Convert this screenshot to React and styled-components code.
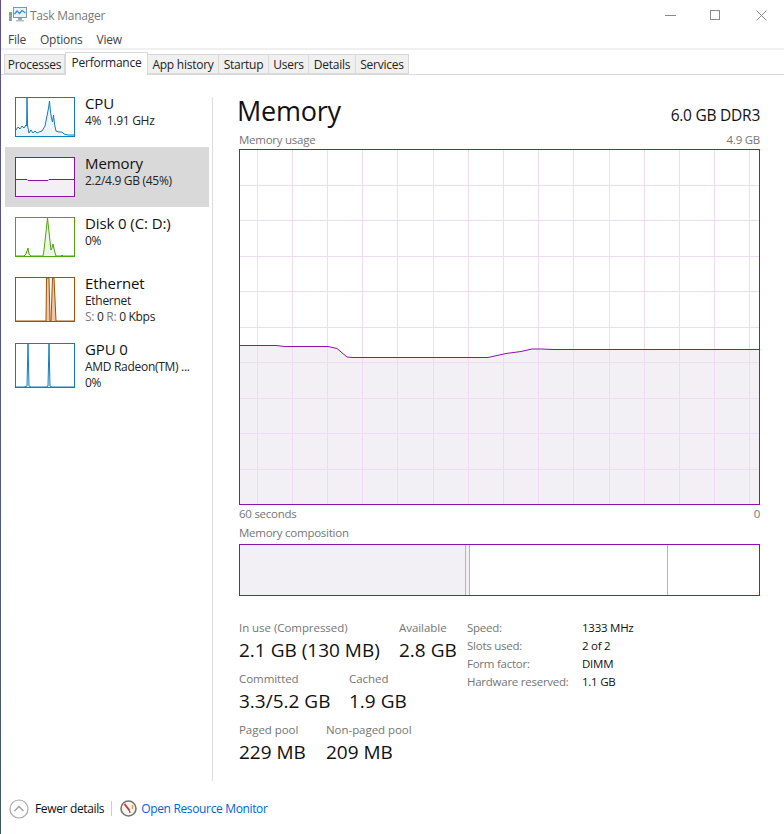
import React from 'react';
import styled, { createGlobalStyle } from 'styled-components';

const PURPLE = '#8b12ae';
const GRID = '#eedcf4';
const FILL = '#f2f0f4';

const GlobalStyle = createGlobalStyle`
  html, body {
    margin: 0;
    padding: 0;
    background: #fff;
  }
  body {
    font-family: 'Open Sans', 'Noto Sans', sans-serif;
    font-size: 12px;
    color: #111;
  }
`;

const tabs = [
  { label: 'Processes', width: 61 },
  { label: 'Performance', width: 83, active: true },
  { label: 'App history', width: 71 },
  { label: 'Startup', width: 50 },
  { label: 'Users', width: 40 },
  { label: 'Details', width: 47 },
  { label: 'Services', width: 53 },
];

const devices = [
  {
    name: 'CPU',
    lines: ['4%  1.91 GHz'],
    color: '#117dbb',
    tint: '#eef5fa',
    points: '0,32 2,29 4,31 6,28 8,30 10,27 10.6,28 11,0 11.6,28 13,35 15,32 17,35 19,33 21,35 23,34 26,33 29,28 31,18 32.5,10 33.5,3 34.5,14 35.5,20 36.5,24 37.5,17 38.5,26 40,33 43,34 46,34 48,36 52,37 58,37',
  },
  {
    name: 'Memory',
    lines: ['2.2/4.9 GB (45%)'],
    color: PURPLE,
    tint: FILL,
    points: '0,21.5 11,21.5 12,22.5 32,22.5 33,21.5 58,21.5',
    selected: true,
  },
  {
    name: 'Disk 0 (C: D:)',
    lines: ['0%'],
    color: '#4da60c',
    tint: '#edf6e6',
    points: '0,38 8,38 10,36 12,30 13,36 15,38 27,38 28,32 30,14 31.5,0 33,14 35,32 36,30 37,26 38.5,33 40,38 45,38 46,37 47,38 58,38',
  },
  {
    name: 'Ethernet',
    lines: ['Ethernet', 'throughput'],
    color: '#a74f01',
    tint: '#eec7a6',
    points: '0,43 30,43 30.5,0 33,0 34,43 35,43 36.5,0 38,0 40,43 58,43',
    tall: true,
  },
  {
    name: 'GPU 0',
    lines: ['AMD Radeon(TM) ...', '0%'],
    color: '#117dbb',
    tint: '#e6f1f8',
    points: '0,43 8,43 11,42 12,0 13,42 15,43 30,43 32,42 33,0 34,42 36,43 58,43',
    tall: true,
  },
];

const gridX = Array.from({ length: 15 }, (_, i) => Math.floor(17 + i * 35.2) + 0.5);
const gridY = Array.from({ length: 9 }, (_, i) => Math.floor(35 + i * 35.5) + 0.5);
const usage = '0,195.5 36,195.5 45,196.5 88,196.5 97,198.5 107,207 113,207.5 248,207.5 266,203.5 281,201.5 292,199 302,199 312,199.5 519,199.5';

const stats = [
  [
    { label: 'In use (Compressed)', value: '2.1 GB (130 MB)', width: 160 },
    { label: 'Available', value: '2.8 GB', width: 68 },
  ],
  [
    { label: 'Committed', value: '3.3/5.2 GB', width: 110 },
    { label: 'Cached', value: '1.9 GB', width: 68 },
  ],
  [
    { label: 'Paged pool', value: '229 MB', width: 87 },
    { label: 'Non-paged pool', value: '209 MB', width: 100 },
  ],
];

const specs = [
  ['Speed:', '1333 MHz'],
  ['Slots used:', '2 of 2'],
  ['Form factor:', 'DIMM'],
  ['Hardware reserved:', '1.1 GB'],
];

const Sparkline = ({ device }) => {
  const h = device.tall ? 43 : 38;
  return (
    <Thumb $color={device.color} $tall={device.tall}>
      <svg width="58" height={h} viewBox={`0 0 58 ${h}`}>
        <polygon points={`0,${h} ${device.points} 58,${h}`} fill={device.tint} />
        <polyline points={device.points} fill="none" stroke={device.color} strokeWidth="1" />
      </svg>
    </Thumb>
  );
};

const AppIcon = () => (
  <svg width="18" height="16" viewBox="0 0 18 16">
    <rect x="0" y="5" width="3" height="9" fill="#8fa3a3" />
    <rect x="0.5" y="6" width="2" height="2" fill="#58c04a" />
    <rect x="4.5" y="0.5" width="13" height="10" fill="#e8f3fb" stroke="#7d97ab" />
    <polyline points="5.5,7 8,4 10.5,6.5 13,3.5 16.5,6" fill="none" stroke="#2f8fd8" strokeWidth="1.2" />
    <rect x="9" y="11" width="4" height="2" fill="#9aa9b3" />
    <rect x="7" y="13" width="8" height="1.5" fill="#b4bfc6" />
  </svg>
);

const MinimizeIcon = () => (
  <svg width="11" height="11" viewBox="0 0 11 11">
    <line x1="0" y1="5.5" x2="11" y2="5.5" stroke="#8a8a8a" />
  </svg>
);

const MaximizeIcon = () => (
  <svg width="11" height="11" viewBox="0 0 11 11">
    <rect x="0.5" y="0.5" width="9" height="9" fill="none" stroke="#8a8a8a" />
  </svg>
);

const CloseIcon = () => (
  <svg width="11" height="11" viewBox="0 0 11 11">
    <path d="M0.5 0.5 L10.5 10.5 M10.5 0.5 L0.5 10.5" stroke="#8a8a8a" fill="none" />
  </svg>
);

const FewerIcon = () => (
  <svg width="20" height="20" viewBox="0 0 20 20">
    <circle cx="10" cy="10" r="9" fill="#fff" stroke="#a8a8a8" strokeWidth="1.2" />
    <polyline points="5.5,12 10,7.5 14.5,12" fill="none" stroke="#a0a0a0" strokeWidth="1.4" />
  </svg>
);

const MonitorIcon = () => (
  <svg width="17" height="17" viewBox="0 0 17 17">
    <circle cx="8.5" cy="8.5" r="7.5" fill="#f6f4f0" stroke="#77736e" strokeWidth="1.6" />
    <path d="M4.5 4 L9.5 10.5" stroke="#c8322a" strokeWidth="1.8" />
    <path d="M9.5 10.5 L10 13" stroke="#555" strokeWidth="1.2" />
    <path d="M12.5 5 L12.5 9" stroke="#e59a3c" strokeWidth="1.2" />
  </svg>
);

export default function App() {
  return (
    <Window>
      <GlobalStyle />
      <TitleBar>
        <TitleGroup>
          <AppIcon />
          <TitleText>Task Manager</TitleText>
        </TitleGroup>
        <Controls>
          <ControlButton><MinimizeIcon /></ControlButton>
          <ControlButton><MaximizeIcon /></ControlButton>
          <ControlButton><CloseIcon /></ControlButton>
        </Controls>
      </TitleBar>
      <MenuBar>
        <MenuItem>File</MenuItem>
        <MenuItem>Options</MenuItem>
        <MenuItem>View</MenuItem>
      </MenuBar>
      <TabStrip>
        {tabs.map((tab) => (
          <Tab key={tab.label} $width={tab.width} $active={tab.active}>
            {tab.label}
          </Tab>
        ))}
      </TabStrip>
      <Body>
        <Sidebar>
          {devices.map((device) => (
            <DeviceItem key={device.name} $selected={device.selected} $tall={device.tall}>
              <Sparkline device={device} />
              <DeviceText>
                <DeviceName>{device.name}</DeviceName>
                {device.lines.map((line) =>
                  line === 'throughput' ? (
                    <DeviceLine key={line}>
                      <Muted>S:</Muted> 0 <Muted>R:</Muted> 0 Kbps
                    </DeviceLine>
                  ) : (
                    <DeviceLine key={line}>{line}</DeviceLine>
                  ),
                )}
              </DeviceText>
            </DeviceItem>
          ))}
        </Sidebar>
        <Divider />
        <Main>
          <Header>
            <PageTitle>Memory</PageTitle>
            <PageSpec>6.0 GB DDR3</PageSpec>
          </Header>
          <CaptionRow>
            <span>Memory usage</span>
            <span>4.9 GB</span>
          </CaptionRow>
          <Chart>
            <svg width="519" height="354" viewBox="0 0 519 354">
              <polygon points={`${usage} 519,354 0,354`} fill={FILL} />
              {gridX.map((x) => (
                <line key={x} x1={x} y1="0" x2={x} y2="354" stroke={GRID} strokeWidth="1" />
              ))}
              {gridY.map((y) => (
                <line key={y} x1="0" y1={y} x2="519" y2={y} stroke={GRID} strokeWidth="1" />
              ))}
              <polyline points={usage} fill="none" stroke={PURPLE} strokeWidth="1" />
            </svg>
          </Chart>
          <AxisRow>
            <span>60 seconds</span>
            <span>0</span>
          </AxisRow>
          <CompositionLabel>Memory composition</CompositionLabel>
          <Composition>
            <Segment $width={225} $filled />
            <Segment $width={5} $divided $edge />
            <Segment $width={197} />
            <Segment $width={92} $divided />
          </Composition>
          <Details>
            <StatGroups>
              {stats.map((row) => (
                <StatRow key={row[0].label}>
                  {row.map((stat) => (
                    <Stat key={stat.label} $width={stat.width}>
                      <StatLabel>{stat.label}</StatLabel>
                      <StatValue>{stat.value}</StatValue>
                    </Stat>
                  ))}
                </StatRow>
              ))}
            </StatGroups>
            <Specs>
              {specs.map(([label, value]) => (
                <React.Fragment key={label}>
                  <SpecLabel>{label}</SpecLabel>
                  <SpecValue>{value}</SpecValue>
                </React.Fragment>
              ))}
            </Specs>
          </Details>
        </Main>
      </Body>
      <Footer>
        <FewerIcon />
        <FewerText>Fewer details</FewerText>
        <FooterSeparator />
        <MonitorIcon />
        <MonitorLink>Open Resource Monitor</MonitorLink>
      </Footer>
    </Window>
  );
}

const Window = styled.div`
  width: 783px;
  height: 834px;
  border-left: 1px solid;
  border-image: linear-gradient(#5b5191, #4f5a80 60%, #3f5a62) 1;
  background: #fff;
  display: flex;
  flex-direction: column;
  overflow: hidden;
  letter-spacing: -0.25px;
`;

const TitleBar = styled.div`
  height: 30px;
  display: flex;
  align-items: center;
  justify-content: space-between;
`;

const TitleGroup = styled.div`
  display: flex;
  align-items: center;
  gap: 3px;
  padding-left: 8px;
`;

const TitleText = styled.span`
  color: #7a7a7a;
  font-size: 12px;
`;

const Controls = styled.div`
  display: flex;
`;

const ControlButton = styled.div`
  width: 45.5px;
  height: 30px;
  display: flex;
  align-items: center;
  justify-content: center;
`;

const MenuBar = styled.div`
  height: 18px;
  display: flex;
  align-items: center;
  gap: 14px;
  padding-left: 7px;
`;

const MenuItem = styled.span`
  color: #444;
  font-size: 12px;
`;

const TabStrip = styled.div`
  height: 27px;
  box-sizing: border-box;
  border-top: 2px solid #f0f0f0;
  border-bottom: 1px solid #d9d9d9;
  display: flex;
  align-items: flex-end;
  padding-left: 3px;
`;

const Tab = styled.div`
  width: ${(p) => p.$width}px;
  height: ${(p) => (p.$active ? 23 : 20)}px;
  box-sizing: border-box;
  margin-bottom: ${(p) => (p.$active ? -1 : 0)}px;
  padding-bottom: ${(p) => (p.$active ? 4 : 0)}px;
  display: flex;
  align-items: center;
  justify-content: center;
  font-size: 12px;
  color: #222;
  background: ${(p) => (p.$active ? '#fff' : '#f0f0f0')};
  border: 1px solid #d9d9d9;
  border-bottom: ${(p) => (p.$active ? '0' : '1px solid #d9d9d9')};
  border-left: ${(p) => (p.$active ? '1px solid #d9d9d9' : '0')};
  position: relative;
  white-space: nowrap;
  &:first-child {
    border-left: 1px solid #d9d9d9;
  }
`;

const Body = styled.div`
  flex: 1;
  display: flex;
  min-height: 0;
`;

const Sidebar = styled.div`
  width: 207px;
  padding: 12px 0 0 4px;
  box-sizing: border-box;
  flex: none;
  display: flex;
  flex-direction: column;
`;

const DeviceItem = styled.div`
  display: flex;
  gap: 10px;
  padding: 10px;
  width: 204px;
  height: ${(p) => (p.$tall ? 66 : 60)}px;
  box-sizing: border-box;
  background: ${(p) => (p.$selected ? '#d9d9d9' : 'transparent')};
`;

const Thumb = styled.div`
  width: 60px;
  height: ${(p) => (p.$tall ? 45 : 40)}px;
  flex: none;
  box-sizing: border-box;
  border: 1px solid ${(p) => p.$color};
  background: #fff;
  svg {
    display: block;
  }
`;

const DeviceText = styled.div`
  min-width: 0;
  margin-top: -4px;
`;

const DeviceName = styled.div`
  font-size: 15px;
  line-height: 20px;
  color: #111;
  letter-spacing: -0.1px;
`;

const DeviceLine = styled.div`
  font-size: 12px;
  line-height: 16px;
  color: #222;
  white-space: pre;
  letter-spacing: -0.3px;
`;

const Muted = styled.span`
  color: #7a7a7a;
`;

const Divider = styled.div`
  width: 1px;
  margin: 22px 0 0 4px;
  background: #dcdcdc;
  flex: none;
`;

const Main = styled.div`
  width: 521px;
  margin-left: 26px;
  flex: none;
  display: flex;
  flex-direction: column;
  padding-top: 18px;
`;

const Header = styled.div`
  display: flex;
  justify-content: space-between;
  align-items: baseline;
  height: 40px;
`;

const PageTitle = styled.div`
  font-size: 27px;
  line-height: 36px;
  color: #111;
  margin-left: -2px;
`;

const PageSpec = styled.div`
  font-size: 15.5px;
  color: #111;
`;

const CaptionRow = styled.div`
  display: flex;
  justify-content: space-between;
  height: 16px;
  line-height: 14px;
  font-size: 11.5px;
  color: #757575;
`;

const Chart = styled.div`
  width: 521px;
  height: 356px;
  box-sizing: border-box;
  border: 1px solid ${PURPLE};
  svg {
    display: block;
  }
`;

const AxisRow = styled(CaptionRow)`
  height: 19px;
  line-height: 18px;
`;

const CompositionLabel = styled.div`
  font-size: 11.5px;
  line-height: 18px;
  height: 20px;
  color: #757575;
`;

const Composition = styled.div`
  width: 521px;
  height: 52px;
  box-sizing: border-box;
  border: 1px solid ${PURPLE};
  display: flex;
`;

const Segment = styled.div`
  width: ${(p) => p.$width}px;
  flex: none;
  box-sizing: border-box;
  background: ${(p) => (p.$filled || p.$edge ? FILL : '#fff')};
  border-left: ${(p) => (p.$divided ? '1px solid #c9a6dc' : '0')};
  border-right: ${(p) => (p.$edge ? '1px solid #c9a6dc' : '0')};
`;

const Details = styled.div`
  display: flex;
  margin-top: 23px;
`;

const StatGroups = styled.div`
  width: 228px;
  flex: none;
  display: flex;
  flex-direction: column;
  gap: 7px;
`;

const StatRow = styled.div`
  display: flex;
`;

const Stat = styled.div`
  width: ${(p) => p.$width}px;
  flex: none;
  white-space: nowrap;
`;

const StatLabel = styled.div`
  font-size: 11.5px;
  line-height: 17px;
  color: #757575;
  letter-spacing: -0.05px;
`;

const StatValue = styled.div`
  font-size: 19px;
  line-height: 25px;
  padding-top: 2px;
  color: #111;
  letter-spacing: 0;
`;

const Specs = styled.div`
  display: grid;
  grid-template-columns: 115px auto;
  grid-auto-rows: 18px;
  align-items: center;
  align-content: start;
  margin-top: -1px;
`;

const SpecLabel = styled.div`
  font-size: 11.5px;
  color: #757575;
`;

const SpecValue = styled.div`
  font-size: 11.5px;
  color: #111;
`;

const Footer = styled.div`
  height: 53px;
  display: flex;
  align-items: center;
  padding: 2px 0 0 8px;
  box-sizing: border-box;
  flex: none;
  letter-spacing: -0.35px;
`;

const FewerText = styled.span`
  margin-left: 6px;
  font-size: 12px;
  color: #111;
`;

const FooterSeparator = styled.div`
  width: 1px;
  height: 15px;
  background: #ccc;
  margin: 0 8px 0 7px;
`;

const MonitorLink = styled.span`
  margin-left: 4px;
  font-size: 12px;
  color: #0066cc;
`;
